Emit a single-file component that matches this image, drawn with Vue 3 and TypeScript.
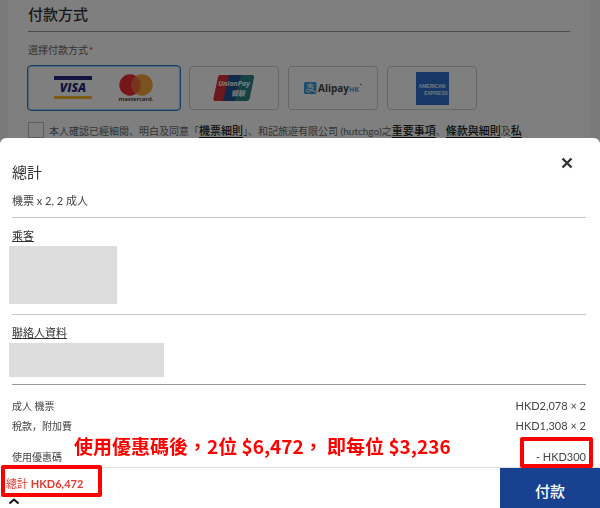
<script setup lang="ts">
import { ref } from 'vue'

interface FareRow {
  label: string
  amount: string
  marked?: boolean
}

const method = ref('card')
const agreed = ref(false)

const fares: FareRow[] = [
  { label: '成人 機票', amount: 'HKD2,078 × 2' },
  { label: '稅款，附加費', amount: 'HKD1,308 × 2' },
  { label: '使用優惠碼', amount: '- HKD300', marked: true },
]
</script>

<template>
  <div class="page">
    <main class="checkout">
      <h1 class="heading">付款方式</h1>
      <fieldset class="methods">
        <legend class="legend">選擇付款方式<span class="required">*</span></legend>
        <div class="options">
          <label class="option wide" :class="{ selected: method === 'card' }">
            <input v-model="method" class="radio" type="radio" name="method" value="card" aria-label="Visa / Mastercard" />
            <svg width="38" height="24" viewBox="0 0 38 24">
              <rect width="38" height="4" fill="#262b80" />
              <rect y="20" width="38" height="3" fill="#f7b92a" />
              <text x="19" y="16" text-anchor="middle" class="visa">VISA</text>
            </svg>
            <svg width="36" height="28" viewBox="0 0 36 28">
              <circle cx="12" cy="11" r="10.7" fill="#eb2c34" />
              <circle cx="24" cy="11" r="10.7" fill="#f7a53a" />
              <path d="M18 2.200a10.700 10.700 0 0 1 0 17.600a10.700 10.700 0 0 1 0-17.600z" fill="#ee6a38" />
              <text x="18" y="27" text-anchor="middle" class="master">mastercard.</text>
            </svg>
          </label>
          <label class="option" :class="{ selected: method === 'unionpay' }">
            <input v-model="method" class="radio" type="radio" name="method" value="unionpay" aria-label="UnionPay" />
            <svg width="42" height="26" viewBox="0 0 42 26">
              <path d="M7 0H17L11 26H2Q0 26 0.500 23L5 2Q5.500 0 7 0z" fill="#d8323c" />
              <path d="M16 0H29L23 26H10z" fill="#24508e" />
              <path d="M28 0H39Q41.500 0 41 2.500L36.500 24Q36 26 34 26H22z" fill="#2a8583" />
              <text x="21" y="11" text-anchor="middle" class="union">UnionPay</text>
              <text x="25" y="21" text-anchor="middle" class="union-cjk">银联</text>
            </svg>
          </label>
          <label class="option" :class="{ selected: method === 'alipay' }">
            <input v-model="method" class="radio" type="radio" name="method" value="alipay" aria-label="AlipayHK" />
            <svg width="58" height="16" viewBox="0 0 58 16">
              <rect y="2" width="12.500" height="12" rx="1.500" fill="#3a9bdc" />
              <path d="M2.800 5h7M6.300 3.300v3.700M3.500 7h5.600C8.500 9.500 6.500 12 4 12C1.500 12 1.700 9.200 4 9.200C6.500 9.200 9 11 12.300 12" fill="none" stroke="#fff" stroke-width="1" />
              <text x="14" y="12" class="alipay">Alipay</text>
              <text x="45" y="12" class="hk">HK</text>
              <path d="M56 4.500h2" stroke="#777" stroke-width="1" />
            </svg>
          </label>
          <label class="option" :class="{ selected: method === 'amex' }">
            <input v-model="method" class="radio" type="radio" name="method" value="amex" aria-label="American Express" />
            <svg width="33" height="33" viewBox="0 0 33 33">
              <rect width="33" height="33" fill="#2f70cc" />
              <text x="16" y="16" text-anchor="middle" class="amex">AMERICAN</text>
              <text x="20" y="23" text-anchor="middle" class="amex">EXPRESS</text>
            </svg>
          </label>
        </div>
      </fieldset>
      <div class="terms">
        <input id="agree" v-model="agreed" class="checkbox" type="checkbox" />
        <label for="agree">本人確認已經細閱、明白及同意「<a href="#fare">機票細則</a>」、和記旅遊有限公司 (hutchgo)之<a href="#notice">重要事項</a>、<a href="#terms">條款與細則</a>及<a href="#privacy">私</a></label>
      </div>
    </main>
    <div class="backdrop"></div>

    <section class="sheet" aria-labelledby="sheet-title">
      <div class="details">
        <header class="summary">
          <div class="summary-text">
            <h2 id="sheet-title" class="title">總計</h2>
            <p class="subtitle">機票 x 2, 2 成人</p>
          </div>
          <button class="close" type="button" aria-label="關閉">
            <svg width="14" height="14" viewBox="0 0 14 14">
              <path d="M2.500 2.500L11.500 11.500M11.500 2.500L2.500 11.500" fill="none" stroke="#333" stroke-width="2.400" />
            </svg>
          </button>
        </header>
        <div class="group">
          <a class="group-link" href="#passengers">乘客</a>
          <div class="mask passengers"></div>
        </div>
        <div class="group contact">
          <a class="group-link" href="#contact">聯絡人資料</a>
          <div class="mask contact-info"></div>
        </div>
        <dl class="fares">
          <div v-for="fare in fares" :key="fare.label" class="fare" :class="{ discount: fare.marked }">
            <dt>{{ fare.label }}</dt>
            <dd>{{ fare.amount }}</dd>
            <span v-if="fare.marked" class="marker marker-discount"></span>
          </div>
        </dl>
        <p class="note">使用優惠碼後，2位 $6,472， 即每位 $3,236</p>
      </div>
      <footer class="bar">
        <div class="total">
          <span class="total-text">總計 <b>HKD6,472</b></span>
          <svg class="caret" width="12" height="8" viewBox="0 0 12 8">
            <path d="M1.500 6.500L6 2.500L10.500 6.500" fill="none" stroke="#111" stroke-width="2" />
          </svg>
          <span class="marker marker-total"></span>
        </div>
        <button class="pay" type="button">付款</button>
      </footer>
    </section>
  </div>
</template>

<style>
body {
  background: #f5f5f5;
}
</style>

<style scoped>
.page {
  min-height: 100vh;
  display: flex;
  box-sizing: border-box;
  padding: 0 10px 0 8px;
  overflow: hidden;
  font-family: Lato, "Noto Sans CJK JP", sans-serif;
  font-size: 10px;
  color: #444;
}
.checkout {
  flex: 1;
  min-width: 0;
  padding: 4px 20px 0;
  background: #fff;
}
.heading {
  margin: 0;
  padding-bottom: 7px;
  border-bottom: 1px solid #999;
  font-size: 15px;
  line-height: 20px;
  font-weight: 500;
  color: #333;
}
.methods {
  margin: 0;
  padding: 10px 0 0;
  border: 0;
  min-width: 0;
}
.legend {
  float: left;
  width: 100%;
  padding: 0;
  line-height: 16px;
  color: #666;
}
.required {
  margin-left: 1px;
  color: #e00;
}
.options {
  clear: both;
  display: flex;
  align-items: center;
  gap: 9px;
  padding-top: 7px;
}
.option {
  display: flex;
  align-items: center;
  justify-content: center;
  box-sizing: border-box;
  width: 90px;
  height: 44px;
  border: 1px solid #ccc;
  border-radius: 4px;
}
.option.wide {
  width: 154px;
  height: 46px;
  margin: 0 -1px;
  gap: 26px;
}
.option.selected {
  border: 1px solid #2a7cd0;
  box-shadow: inset 0 0 0 1px #a8cdf0;
}
.radio {
  position: absolute;
  opacity: 0;
  margin: 0;
}
.visa {
  font: italic 800 12px "Open Sans", sans-serif;
  fill: #262b80;
}
.master {
  font: 600 6px "Open Sans", sans-serif;
  fill: #222;
}
.union {
  font: italic 700 7px "Open Sans", sans-serif;
  fill: #fff;
}
.union-cjk {
  font: italic 700 7px "Noto Sans CJK SC", sans-serif;
  fill: #fff;
}
.alipay {
  font: 700 10px "Open Sans", sans-serif;
  fill: #444;
}
.hk {
  font: 700 7px "Open Sans", sans-serif;
  fill: #3a9bdc;
}
.amex {
  font: 700 5px "Liberation Sans", sans-serif;
  fill: #e4effc;
}
.terms {
  display: flex;
  gap: 5px;
  margin-top: 11px;
  line-height: 18px;
  white-space: nowrap;
  color: #666;
}
.checkbox {
  appearance: none;
  flex: none;
  box-sizing: border-box;
  width: 16px;
  height: 16px;
  margin: 0;
  border: 1px solid #bbb;
}
.terms a {
  font-size: 11px;
  font-weight: 500;
  color: #222;
  text-underline-offset: 2px;
}
.backdrop {
  position: fixed;
  inset: 0;
  background: rgba(0, 0, 0, 0.5);
}
.sheet {
  position: fixed;
  left: 0;
  right: 0;
  bottom: 0;
  background: #fff;
  border-radius: 6px 6px 0 0;
}
.details {
  position: relative;
  padding: 18px 14px 0 12px;
}
.summary {
  display: flex;
  justify-content: space-between;
  align-items: flex-start;
  padding-bottom: 8px;
  border-bottom: 1px solid #c4c4c4;
}
.summary-text {
  padding-top: 6px;
}
.title {
  margin: 0;
  font-size: 15px;
  line-height: 20px;
  font-weight: 400;
  color: #333;
}
.subtitle {
  margin: 11px 0 0;
  font-size: 11px;
  line-height: 16px;
}
.close {
  display: flex;
  margin: 0 12px 0 0;
  padding: 0;
  border: 0;
  background: none;
}
.group {
  padding: 10px 0;
  border-bottom: 1px solid #c8c8c8;
}
.group.contact {
  padding-bottom: 7px;
  border-color: #999;
}
.group-link {
  display: block;
  width: fit-content;
  font-size: 11px;
  line-height: 16px;
  color: #333;
  text-underline-offset: 1px;
}
.mask {
  margin: 2px 0 0 -3px;
  background: #ddd;
}
.passengers {
  width: 108px;
  height: 58px;
}
.contact-info {
  width: 155px;
  height: 34px;
}
.fares {
  margin: 0;
  padding-top: 11px;
}
.fare {
  position: relative;
  display: flex;
  justify-content: space-between;
  line-height: 20px;
}
.fare dd {
  margin: 0;
  font-size: 11px;
}
.discount {
  margin-top: 11px;
}
.marker {
  position: absolute;
  box-sizing: border-box;
  border: 4px solid #f00;
  border-radius: 2px;
}
.marker-discount {
  top: -10px;
  right: -7px;
  width: 73px;
  height: 31px;
}
.marker-total {
  top: -3px;
  left: 1px;
  width: 101px;
  height: 32px;
}
.note {
  position: absolute;
  left: 74px;
  bottom: 7px;
  margin: 0;
  font-family: "Noto Sans CJK TC", sans-serif;
  font-size: 19px;
  line-height: 28px;
  font-weight: 700;
  white-space: nowrap;
  color: #f00;
}
.bar {
  display: flex;
  border-top: 1px solid #ddd;
}
.total {
  position: relative;
  flex: 1;
  display: flex;
  flex-direction: column;
  padding: 6px 0 0 6px;
}
.total-text {
  font-size: 11px;
  line-height: 20px;
  color: #e23b30;
}
.caret {
  margin: 3px 0 0 2px;
}
.pay {
  width: 100px;
  height: 40px;
  padding: 4px 0 0;
  border: 0;
  background: #18428f;
  font-family: "Noto Sans CJK TC", sans-serif;
  font-size: 15px;
  font-weight: 500;
  color: #fff;
}
</style>
